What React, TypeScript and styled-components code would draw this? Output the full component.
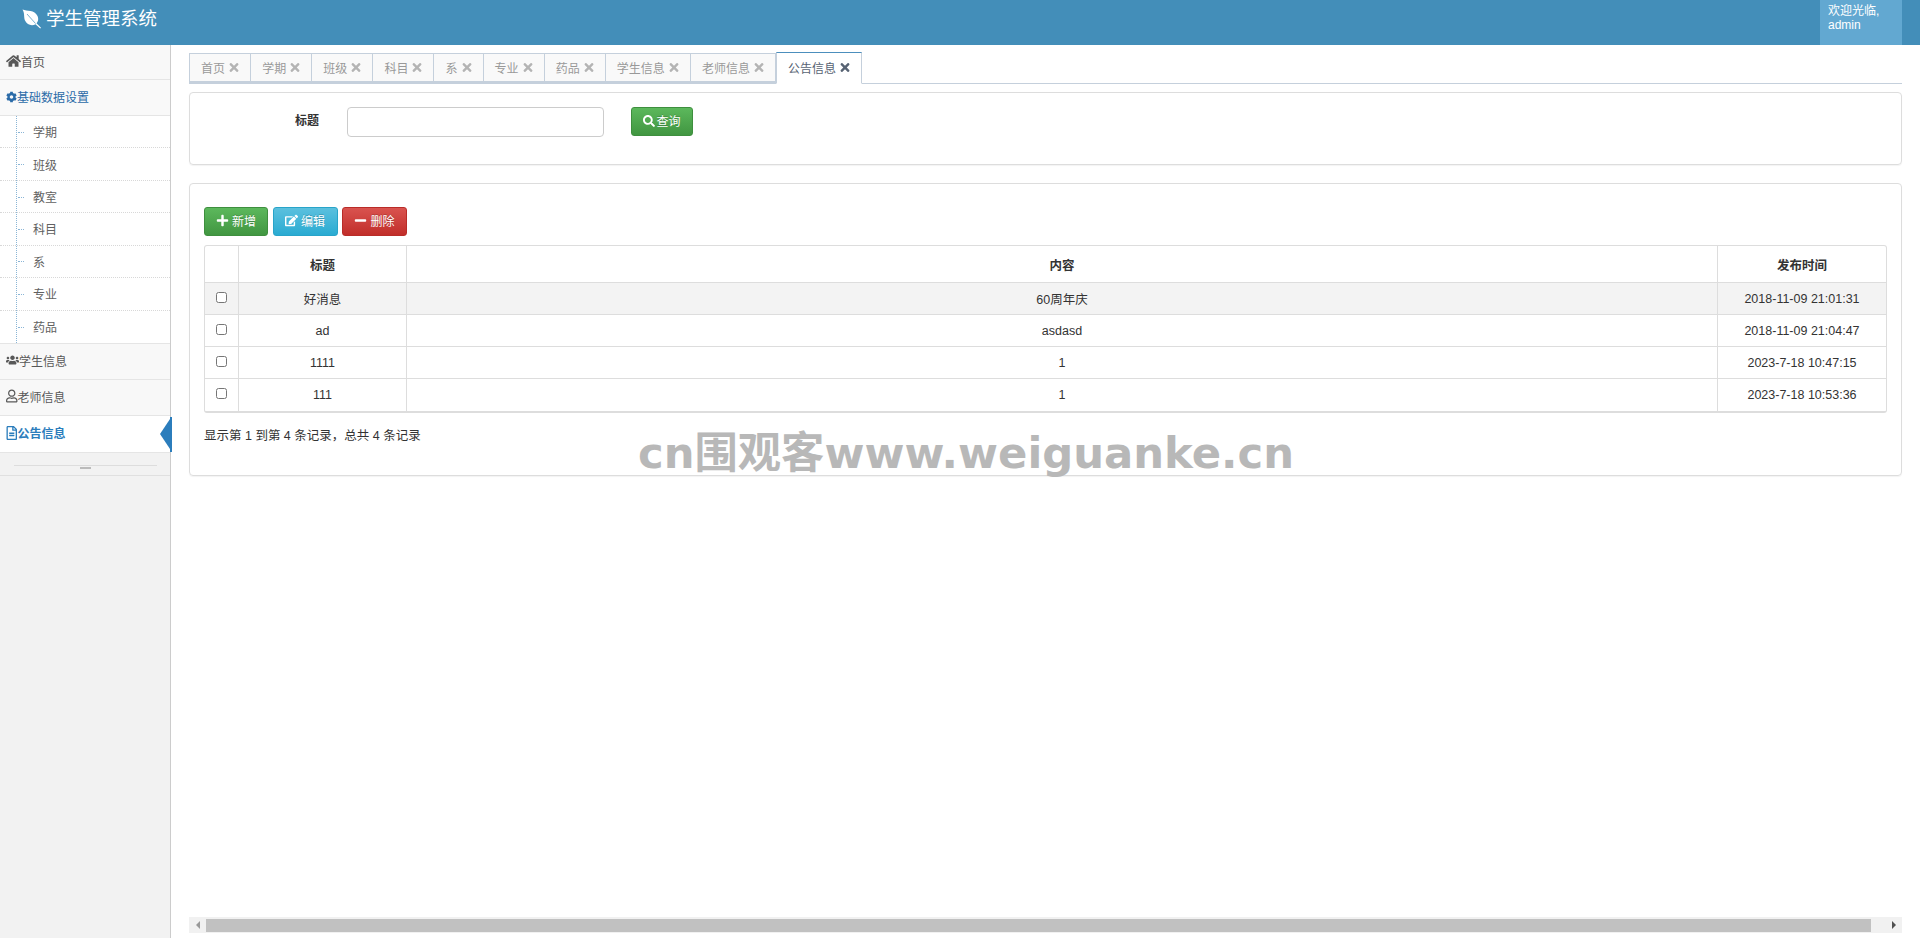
import styled, { createGlobalStyle } from 'styled-components';
import {
  FaCog,
  FaEdit,
  FaHome,
  FaMinus,
  FaPlus,
  FaRegFileAlt,
  FaRegUser,
  FaSearch,
  FaTimes,
  FaUsers,
} from 'react-icons/fa';

const tabs = ['首页', '学期', '班级', '科目', '系', '专业', '药品', '学生信息', '老师信息', '公告信息'];
const subMenu = ['学期', '班级', '教室', '科目', '系', '专业', '药品'];
const rows = [
  { title: '好消息', content: '60周年庆', time: '2018-11-09 21:01:31' },
  { title: 'ad', content: 'asdasd', time: '2018-11-09 21:04:47' },
  { title: '1111', content: '1', time: '2023-7-18 10:47:15' },
  { title: '111', content: '1', time: '2023-7-18 10:53:36' },
];

const GlobalStyle = createGlobalStyle`
  html, body {
    margin: 0;
    height: 100%;
    overflow: hidden;
    background: #fff;
  }
  body {
    font-family: "Liberation Sans", "Noto Sans CJK SC", sans-serif;
    font-size: 12px;
    color: #333;
  }
`;

const Page = styled.div`
  position: relative;
  display: flex;
  flex-direction: column;
  height: 938px;
`;

const Header = styled.header`
  display: flex;
  align-items: flex-start;
  height: 45px;
  flex: none;
  padding-left: 22px;
  padding-right: 18px;
  background: #438eb9;
  color: #fff;
`;

const Brand = styled.div`
  display: flex;
  align-items: center;
  gap: 4px;
  height: 38px;
  font-size: 18.5px;
  line-height: 38px;
`;

const UserBox = styled.div`
  width: 82px;
  height: 45px;
  box-sizing: border-box;
  margin-left: auto;
  padding: 4px 8px;
  background: #62a8d1;
  font-size: 12px;
  line-height: 14px;
`;

const Body = styled.div`
  display: flex;
  flex: 1;
  min-height: 0;
`;

const Sidebar = styled.aside`
  width: 171px;
  flex: none;
  box-sizing: border-box;
  border-right: 1px solid #ccc;
  background: #f2f2f2;
`;

const MenuItem = styled.div<{ $active?: boolean; $open?: boolean; $height: number; $icon: number }>`
  position: relative;
  display: flex;
  align-items: center;
  height: ${(p) => p.$height}px;
  box-sizing: border-box;
  padding: 0 0 2px 6px;
  border-bottom: 1px solid #e5e5e5;
  background: ${(p) => (p.$active ? '#fff' : p.$open ? '#f9f9f9' : '#f8f8f8')};
  color: ${(p) => (p.$active ? '#2b7dbc' : p.$open ? '#2b6ba8' : '#585858')};
  font-weight: ${(p) => (p.$active ? 700 : 400)};
  font-size: 12px;
  svg {
    flex: none;
    width: ${(p) => p.$icon}px;
    height: 14px;
  }
`;

const ActiveArrow = styled.span`
  position: absolute;
  right: -2px;
  top: 1px;
  bottom: 0;
  width: 10px;
  box-sizing: border-box;
  border-right: 2px solid #2b7dbc;
  &::before {
    content: '';
    position: absolute;
    right: 0;
    top: 50%;
    margin-top: -15px;
    border-style: solid;
    border-width: 15px 10px 15px 0;
    border-color: transparent #2b7dbc transparent transparent;
  }
`;

const SubList = styled.div`
  position: relative;
  background: #fff;
  border-bottom: 1px solid #e5e5e5;
  &::before {
    content: '';
    position: absolute;
    left: 16px;
    top: 0;
    bottom: 0;
    border-left: 1px dotted #8ab5d6;
  }
`;

const SubItem = styled.div`
  position: relative;
  display: flex;
  align-items: center;
  height: 32.43px;
  box-sizing: border-box;
  padding-left: 33px;
  border-bottom: 1px dotted #d8d8d8;
  color: #616161;
  &:last-child {
    border-bottom: 0;
  }
  &::before {
    content: '';
    position: absolute;
    left: 18px;
    top: 50%;
    width: 6px;
    border-top: 1px dotted #8ab5d6;
  }
`;

const Collapse = styled.div`
  position: relative;
  height: 23px;
  box-sizing: border-box;
  border-bottom: 1px solid #e0e0e0;
  &::before {
    content: '';
    position: absolute;
    left: 14px;
    right: 13px;
    top: 12px;
    border-top: 1px solid #ddd;
  }
  &::after {
    content: '';
    position: absolute;
    left: 80px;
    top: 14px;
    width: 11px;
    height: 2px;
    background: #bbb;
  }
`;

const Main = styled.main`
  flex: 1;
  min-width: 0;
  display: flex;
  flex-direction: column;
  padding: 7px 18px 5px 18px;
`;

const TabBar = styled.div`
  display: flex;
  align-items: flex-end;
  height: 32px;
  flex: none;
  box-sizing: border-box;
  border-bottom: 1px solid #c5d0dc;
`;

const Tab = styled.div<{ $active?: boolean }>`
  display: flex;
  align-items: center;
  gap: 4px;
  height: ${(p) => (p.$active ? 32 : 30)}px;
  box-sizing: border-box;
  padding: 0 11.05px ${(p) => (p.$active ? 1 : 0)}px;
  margin-bottom: ${(p) => (p.$active ? -1 : 0)}px;
  border: 1px solid #c5d0dc;
  border-left-width: ${(p) => (p.$active ? 1 : 0)}px;
  border-top: ${(p) => (p.$active ? '1px solid #4c8fbd' : '1px solid #c5d0dc')};
  border-bottom: ${(p) => (p.$active ? '1px solid #fff' : '2px solid #c5d0dc')};
  background: ${(p) => (p.$active ? '#fff' : '#f9f9f9')};
  color: ${(p) => (p.$active ? '#576373' : '#999')};
  &:first-child {
    border-left-width: 1px;
  }
  svg {
    width: 10px;
    height: 13px;
    color: ${(p) => (p.$active ? '#576373' : '#b4b4b4')};
  }
`;

const Panel = styled.section<{ $height: number; $top: number }>`
  height: ${(p) => p.$height}px;
  flex: none;
  box-sizing: border-box;
  margin-top: ${(p) => p.$top}px;
  border: 1px solid #ddd;
  border-radius: 4px;
  box-shadow: 0 1px 1px rgba(0, 0, 0, 0.05);
`;

const SearchForm = styled.div`
  display: flex;
  align-items: flex-start;
  padding-top: 14px;
`;

const FieldLabel = styled.label`
  width: 129px;
  flex: none;
  text-align: right;
  font-weight: 700;
  line-height: 28px;
`;

const TextInput = styled.input`
  width: 257px;
  height: 30px;
  box-sizing: border-box;
  margin-left: 28px;
  border: 1px solid #ccc;
  border-radius: 4px;
  outline: 0;
`;

const Button = styled.button<{ $tone: 'green' | 'blue' | 'red' }>`
  display: inline-flex;
  align-items: center;
  justify-content: center;
  height: 29px;
  box-sizing: border-box;
  padding: 0 0 2px;
  border: 1px solid
    ${(p) => ({ green: '#3e8f3e', blue: '#28a4c9', red: '#b92c28' })[p.$tone]};
  border-radius: 3px;
  background: ${(p) =>
    ({
      green: 'linear-gradient(#5cb85c, #419641)',
      blue: 'linear-gradient(#5bc0de, #2aabd2)',
      red: 'linear-gradient(#d9534f, #c12e2a)',
    })[p.$tone]};
  color: #fff;
  font: inherit;
  text-shadow: 0 -1px 0 rgba(0, 0, 0, 0.2);
`;

const SearchButton = styled(Button)`
  width: 62px;
  margin-left: 27px;
  gap: 1px;
  svg {
    width: 12px;
    height: 12px;
  }
`;

const ToolButton = styled(Button)<{ $width: number }>`
  width: ${(p) => p.$width}px;
  gap: 3px;
  svg {
    width: 13px;
    height: 13px;
  }
`;

const TableBlock = styled.div`
  padding: 23px 14px 0;
`;

const Toolbar = styled.div`
  display: flex;
  gap: 4.5px;
  margin-bottom: 9px;
`;

const TableFrame = styled.div`
  border: 1px solid #ddd;
  border-bottom-width: 2px;
  border-radius: 3px;
  overflow: hidden;
  font-size: 12.5px;
`;

const DataTable = styled.table`
  width: 100%;
  table-layout: fixed;
  border-collapse: collapse;
`;

const Th = styled.th<{ $width?: number }>`
  width: ${(p) => (p.$width ? `${p.$width}px` : 'auto')};
  height: 36px;
  padding: 0;
  border-left: 1px solid #ddd;
  border-bottom: 1px solid #ddd;
  font-weight: 700;
  &:first-child {
    border-left: 0;
  }
`;

const Tr = styled.tr<{ $striped?: boolean }>`
  height: 32px;
  background: ${(p) => (p.$striped ? '#f3f3f3' : '#fff')};
  &:last-child td {
    border-bottom: 0;
  }
`;

const Td = styled.td`
  padding: 0;
  border-left: 1px solid #ddd;
  border-bottom: 1px solid #ddd;
  text-align: center;
  &:first-child {
    border-left: 0;
  }
  input {
    width: 11px;
    height: 11px;
    margin: 0 0 3px;
    vertical-align: middle;
  }
`;

const Summary = styled.div`
  margin-top: 15px;
  font-size: 12.5px;
  line-height: 17px;
`;

const Scrollbar = styled.div`
  display: flex;
  align-items: center;
  height: 16px;
  flex: none;
  margin-top: auto;
  background: #f1f1f1;
`;

const ScrollThumb = styled.div`
  flex: 1;
  height: 13px;
  background: #c1c1c1;
`;

const ScrollArrow = styled.span<{ $right?: boolean }>`
  width: ${(p) => (p.$right ? 31 : 17)}px;
  flex: none;
  box-sizing: border-box;
  display: flex;
  justify-content: ${(p) => (p.$right ? 'flex-end' : 'center')};
  padding-right: ${(p) => (p.$right ? 6 : 0)}px;
  &::before {
    content: '';
    border-style: solid;
    border-width: 4px 0 4px 4px;
    border-color: transparent transparent transparent #505050;
    transform: ${(p) => (p.$right ? 'none' : 'rotate(180deg)')};
    opacity: ${(p) => (p.$right ? 1 : 0.55)};
  }
`;

const Watermark = styled.div`
  position: absolute;
  left: 638px;
  top: 423px;
  font-family: "DejaVu Sans", "Noto Sans CJK SC", sans-serif;
  font-size: 43.3px;
  font-weight: 700;
  line-height: 60px;
  white-space: nowrap;
  color: #b8b8b8;
`;

const LeafLogo = () => (
  <svg width="20" height="20" viewBox="0 0 20 20">
    <path
      fill="#fff"
      d="M0.500 0.500 C5 2.500 12.500 0.500 15.500 7 C17 10.500 15.800 13 14.500 14.300 L19 18.800 L18.200 19.600 L13.500 15.200 C9.500 17.500 5 15.500 3 11.500 C1.500 8 3 4.500 0.500 0.500 Z"
    />
    <path stroke="#438eb9" strokeWidth="0.7" fill="none" d="M5 5 L13.500 14.500" />
  </svg>
);

const App = () => {
  return (
    <Page>
      <GlobalStyle />
      <Header>
        <Brand>
          <LeafLogo />
          学生管理系统
        </Brand>
        <UserBox>
          欢迎光临,
          <br />
          admin
        </UserBox>
      </Header>
      <Body>
        <Sidebar>
          <MenuItem $height={35} $icon={15}>
            <FaHome />
            首页
          </MenuItem>
          <MenuItem $height={36} $open $icon={11}>
            <FaCog />
            基础数据设置
          </MenuItem>
          <SubList>
            {subMenu.map((item) => (
              <SubItem key={item}>{item}</SubItem>
            ))}
          </SubList>
          <MenuItem $height={36} $icon={13}>
            <FaUsers />
            学生信息
          </MenuItem>
          <MenuItem $height={36} $icon={11.5}>
            <FaRegUser />
            老师信息
          </MenuItem>
          <MenuItem $height={37} $active $icon={11.5}>
            <FaRegFileAlt />
            公告信息
            <ActiveArrow />
          </MenuItem>
          <Collapse />
        </Sidebar>
        <Main>
          <TabBar>
            {tabs.map((tab, i) => (
              <Tab key={tab} $active={i === tabs.length - 1}>
                {tab}
                <FaTimes />
              </Tab>
            ))}
          </TabBar>
          <Panel $height={73} $top={8}>
            <SearchForm>
              <FieldLabel>标题</FieldLabel>
              <TextInput />
              <SearchButton $tone="green">
                <FaSearch />
                查询
              </SearchButton>
            </SearchForm>
          </Panel>
          <Panel $height={293} $top={18}>
            <TableBlock>
              <Toolbar>
                <ToolButton $tone="green" $width={64}>
                  <FaPlus />
                  新增
                </ToolButton>
                <ToolButton $tone="blue" $width={65}>
                  <FaEdit />
                  编辑
                </ToolButton>
                <ToolButton $tone="red" $width={65}>
                  <FaMinus />
                  删除
                </ToolButton>
              </Toolbar>
              <TableFrame>
                <DataTable>
                  <thead>
                    <tr>
                      <Th $width={33} />
                      <Th $width={167}>标题</Th>
                      <Th>内容</Th>
                      <Th $width={168}>发布时间</Th>
                    </tr>
                  </thead>
                  <tbody>
                    {rows.map((row, i) => (
                      <Tr key={row.time} $striped={i === 0}>
                        <Td>
                          <input type="checkbox" />
                        </Td>
                        <Td>{row.title}</Td>
                        <Td>{row.content}</Td>
                        <Td>{row.time}</Td>
                      </Tr>
                    ))}
                  </tbody>
                </DataTable>
              </TableFrame>
              <Summary>显示第 1 到第 4 条记录{'\uFF0C'}总共 4 条记录</Summary>
            </TableBlock>
          </Panel>
          <Scrollbar>
            <ScrollArrow />
            <ScrollThumb />
            <ScrollArrow $right />
          </Scrollbar>
        </Main>
      </Body>
      <Watermark>cn围观客www.weiguanke.cn</Watermark>
    </Page>
  );
};

export default App;
